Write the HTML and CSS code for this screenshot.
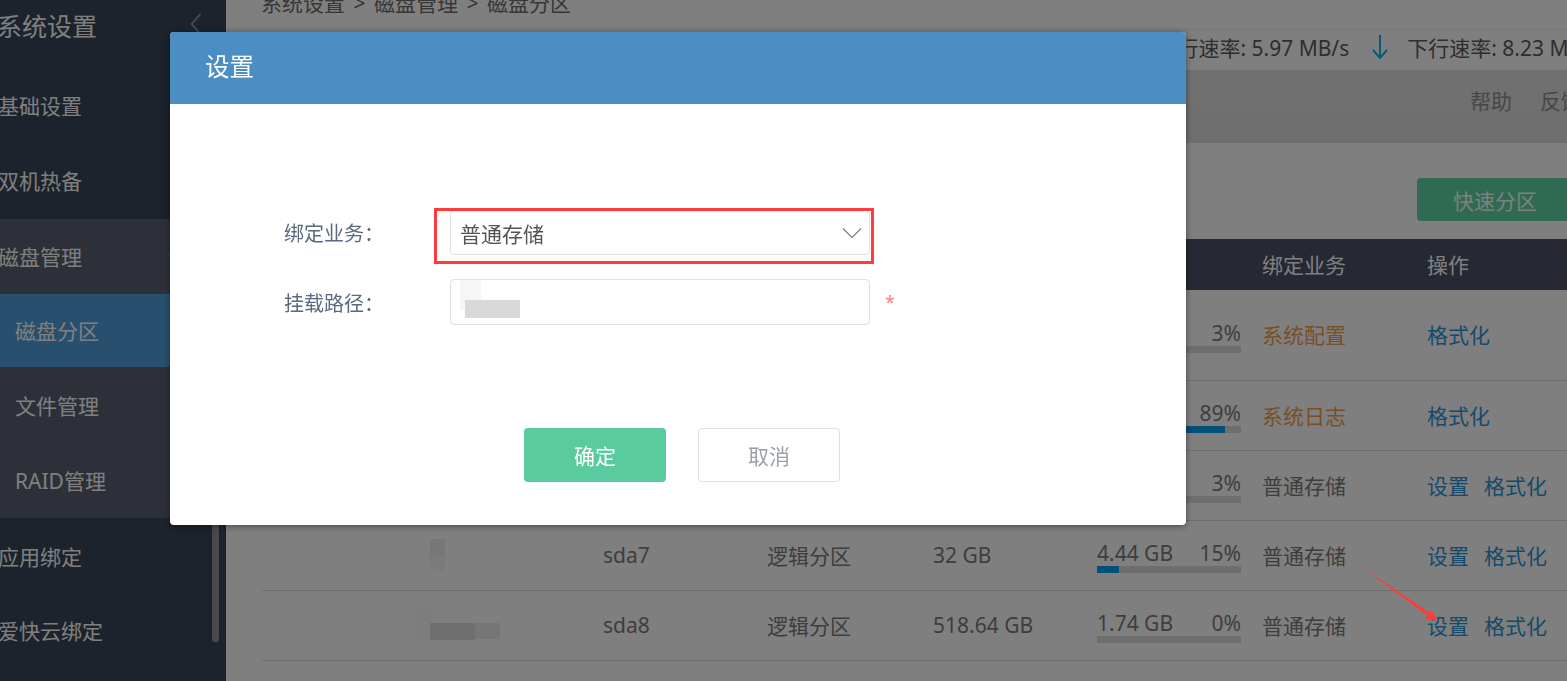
FILE: index.html
```html
<!DOCTYPE html>
<html lang="zh-CN">
<head>
<meta charset="utf-8">
<title>磁盘分区</title>
<link rel="stylesheet" href="styles.css">
</head>
<body>
<div class="app">
  <aside class="sidebar">
    <div class="side-title"><span>系统设置</span>
      <svg class="collapse" width="12" height="22" viewBox="0 0 12 22"><path d="M10.5 1 1.5 11l9 10" fill="none" stroke="#aaa" stroke-width="1.4"/></svg>
    </div>
    <div class="side-item">基础设置</div>
    <div class="side-item">双机热备</div>
    <div class="side-group">
      <div class="side-item"><span>磁盘管理</span>
        <svg class="caret" width="10" height="6" viewBox="0 0 10 6"><path d="M1 1l4 4 4-4" fill="none" stroke="#aaa" stroke-width="1.3"/></svg>
      </div>
      <div class="side-sub active">磁盘分区</div>
      <div class="side-sub">文件管理</div>
      <div class="side-sub">RAID管理</div>
    </div>
    <div class="side-item">应用绑定</div>
    <div class="side-item">爱快云绑定</div>
    <div class="side-scroll"></div>
  </aside>
  <main class="main">
    <div class="crumb">系统设置<span class="sep">&gt;</span>磁盘管理<span class="sep">&gt;</span>磁盘分区</div>
    <div class="speed">
      <svg width="18" height="26" viewBox="0 0 18 26"><path d="M9 1v23M2 16l7 8 7-8" fill="none" stroke="#14b0f5" stroke-width="2"/></svg>
      <span>上行速率: 5.97 MB/s</span>
      <svg class="down" width="18" height="26" viewBox="0 0 18 26"><path d="M9 1v23M2 16l7 8 7-8" fill="none" stroke="#14b0f5" stroke-width="2"/></svg>
      <span>下行速率: 8.23 MB/s</span>
    </div>
    <nav class="topnav"><a>帮助</a><a>反馈</a></nav>
    <div class="toolbar"><button class="quick">快速分区</button></div>
    <section class="table">
      <div class="row head">
        <div></div><div></div><div></div><div></div><div></div><div>绑定业务</div><div>操作</div>
      </div>
      <div class="row first">
        <div></div><div></div><div></div><div></div>
        <div class="usage"><div class="usage-text"><span></span><span>3%</span></div><div class="track"><div class="fill" style="width:3%"></div></div></div>
        <div class="warn">系统配置</div><div class="ops"><a>格式化</a></div>
      </div>
      <div class="row">
        <div></div><div></div><div></div><div></div>
        <div class="usage"><div class="usage-text"><span></span><span>89%</span></div><div class="track"><div class="fill" style="width:89%"></div></div></div>
        <div class="warn">系统日志</div><div class="ops"><a>格式化</a></div>
      </div>
      <div class="row">
        <div></div><div></div><div></div><div></div>
        <div class="usage"><div class="usage-text"><span>14.93 GB</span><span>3%</span></div><div class="track"><div class="fill" style="width:3%"></div></div></div>
        <div>普通存储</div><div class="ops"><a>设置</a><a>格式化</a></div>
      </div>
      <div class="row">
        <div class="name-cell"><div class="blur blur-one"></div></div><div>sda7</div><div>逻辑分区</div><div>32 GB</div>
        <div class="usage"><div class="usage-text"><span>4.44 GB</span><span>15%</span></div><div class="track"><div class="fill" style="width:15%"></div></div></div>
        <div>普通存储</div><div class="ops"><a>设置</a><a>格式化</a></div>
      </div>
      <div class="row">
        <div class="name-cell"><div class="blur blur-two"></div></div><div>sda8</div><div>逻辑分区</div><div>518.64 GB</div>
        <div class="usage"><div class="usage-text"><span>1.74 GB</span><span>0%</span></div><div class="track"></div></div>
        <div>普通存储</div><div class="ops"><a>设置</a><a>格式化</a></div>
      </div>
    </section>
  </main>
</div>

<div class="overlay"></div>

<div class="modal">
  <header class="modal-head">设置</header>
  <div class="modal-body">
    <div class="field">
      <label>绑定业务：</label>
      <div class="control select"><span>普通存储</span>
        <svg width="20" height="12" viewBox="0 0 20 12"><path d="M1 1.5 10 10.5l9-9" fill="none" stroke="#888" stroke-width="1.3"/></svg>
      </div>
    </div>
    <div class="field">
      <label>挂载路径：</label>
      <div class="control input"><div class="blur blur-input"></div></div>
      <span class="required">*</span>
    </div>
    <div class="actions">
      <button class="btn-ok">确定</button>
      <button class="btn-cancel">取消</button>
    </div>
  </div>
</div>

<div class="mark-box"></div>
<svg class="mark-arrow" width="80" height="58" viewBox="0 0 80 58"><path d="M0 0 67 45.5 65 48.5Z" fill="#ff3b3b"/><path d="M76 53.5 63.5 52 69 43Z" fill="#ff3b3b"/></svg>
</body>
</html>
```
FILE: styles.css
```css
* { box-sizing: border-box; }
html, body { margin: 0; height: 100%; overflow: hidden; }
body {
  width: 1567px;
  height: 681px;
  background: #fff;
  color: #7c7c7c;
  font-family: "Noto Sans", "Noto Sans CJK SC", sans-serif;
  font-size: 21px;
}
.app { display: flex; height: 681px; }

.sidebar {
  position: relative;
  flex: 0 0 226px;
  background: #3a4658;
  color: #fff;
  overflow: hidden;
}
.side-title {
  display: flex;
  align-items: center;
  height: 68px;
  padding: 0 0 18px 0;
  font-size: 25px;
  text-indent: -3px;
}
.side-title span { flex: 1; }
.collapse { margin-right: 24px; margin-top: -2px; }
.side-item { display: flex; align-items: center; height: 75.5px; padding-bottom: 2px; text-indent: -2px; }
.side-group + .side-item { padding-bottom: 0; }
.side-group { background: #5a6072; }
.side-group .side-item { height: 75px; justify-content: space-between; }
.caret { margin-right: 48px; }
.side-sub { display: flex; align-items: center; height: 75.5px; padding-left: 15px; }
.side-sub.active { height: 73px; padding-bottom: 1px; background: #50a0dc; }
.side-scroll {
  position: absolute;
  right: 7px;
  bottom: 39px;
  width: 7px;
  height: 400px;
  border-radius: 3px;
  background: #929292;
}

.main { flex: 1; min-width: 0; overflow: hidden; display: flex; flex-direction: column; }
.crumb { flex: none; height: 29px; margin: -12px 0 12px; padding-left: 35px; line-height: 30px; color: #6e6e6e; white-space: nowrap; }
.sep { margin: 0 8.5px; }
.speed {
  flex: none;
  display: flex;
  justify-content: flex-end;
  align-items: center;
  height: 41px;
  margin-right: -33px;
  padding-bottom: 6px;
  border-top: 1px solid #f0f0f0;
  color: #5c5c5c;
  white-space: nowrap;
}
.speed .down { margin: 0 18px 0 22px; }
.topnav {
  flex: none;
  display: flex;
  justify-content: flex-end;
  gap: 28px;
  height: 73px;
  margin-right: -15px;
  padding-top: 16px;
  background: linear-gradient(#e2e2e2, #dddddd);
  color: #8e8e8e;
  line-height: 30px;
}
.toolbar { flex: none; display: flex; justify-content: flex-end; height: 96px; padding-top: 35px; margin-right: -6px; }
.quick {
  width: 156px;
  height: 43px;
  border: 0;
  border-radius: 4px;
  background: #5ed6a4;
  color: #fff;
  font: inherit;
  padding: 0;
}

.table { flex: none; margin-left: 36px; }
.row {
  display: grid;
  grid-template-columns: 341px 164px 166px 164px 165px 165px 1fr;
  align-items: center;
  height: 70px;
  padding-bottom: 2px;
  border-bottom: 1px solid #dedede;
}
.row > div { min-width: 0; }
.row.head { height: 51px; background: #4c5066; color: #fff; border-bottom: 0; }
.row.first { height: 91px; }
.usage { width: 144px; }
.usage-text { display: flex; justify-content: space-between; padding-top: 4px; line-height: 26px; white-space: nowrap; }
.track { height: 7px; background: #dcdcdc; }
.fill { height: 100%; background: #00a0f0; }
.warn { color: #f0a04e; }
.ops { display: flex; gap: 15px; white-space: nowrap; }
.ops a { color: #2c94d8; }

.name-cell { height: 100%; display: flex; align-items: center; padding-left: 153px; }
.blur { background-repeat: no-repeat; }
.blur-one {
  width: 34px;
  height: 36px;
  background-image: linear-gradient(#eeeeee, #eeeeee), linear-gradient(#f6f6f6, #f6f6f6);
  background-size: 15px 18px, 15px 14px;
  background-position: 15px 2px, 15px 20px;
}
.blur-two {
  width: 85px;
  height: 34px;
  background-image: linear-gradient(#dedede, #dedede), linear-gradient(#ececec, #ececec), linear-gradient(#fafafa, #fafafa);
  background-size: 45px 17px, 27px 16px, 18px 32px;
  background-position: 15px 15px, 58px 15px, 0 1px;
}

.overlay { position: fixed; inset: 0; background: rgba(0, 0, 0, .5); }

.modal {
  position: absolute;
  left: 170px;
  top: 32px;
  width: 1016px;
  height: 493px;
  border-radius: 4px;
  background: #fff;
  box-shadow: 0 1px 6px rgba(0, 0, 0, .45);
  overflow: hidden;
}
.modal-head {
  height: 72px;
  padding-left: 35px;
  background: #4b8ec4;
  color: #fff;
  font-size: 24.5px;
  line-height: 70px;
}
.modal-body { padding: 106px 0 0 114px; }
.field { display: flex; align-items: center; margin-bottom: 24px; color: #5a6a7e; }
.field label { flex: 0 0 166px; font-size: 20px; }
.control {
  display: flex;
  align-items: center;
  justify-content: space-between;
  width: 420px;
  height: 45px;
  padding: 0 7px 0 9px;
  border: 1px solid #e0e0e0;
  border-radius: 4px;
  color: #555;
}
.input { height: 46px; padding: 0; }
.blur-input {
  width: 72px;
  height: 44px;
  background-image: linear-gradient(#d9d9d9, #d9d9d9), linear-gradient(#f6f6f6, #f6f6f6);
  background-size: 55px 18px, 21px 30px;
  background-position: 14px 20px, 9px 0;
}
.required { margin: 0 0 0 15px; color: #ff7a7a; font-size: 18px; }
.actions { display: flex; gap: 32px; margin: 103px 0 0 240px; }
.actions button { width: 142px; height: 54px; border-radius: 4px; font: inherit; padding: 0; }
.btn-ok { border: 0; background: #59cb9f; color: #fff; }
.btn-cancel { border: 1px solid #e0e0e0; background: #fff; color: #98a2ab; }

.mark-box {
  position: absolute;
  left: 434px;
  top: 208px;
  width: 440px;
  height: 56px;
  border: 3px solid #ff3b3b;
}
.mark-arrow { position: absolute; left: 1362px; top: 567px; }
```
